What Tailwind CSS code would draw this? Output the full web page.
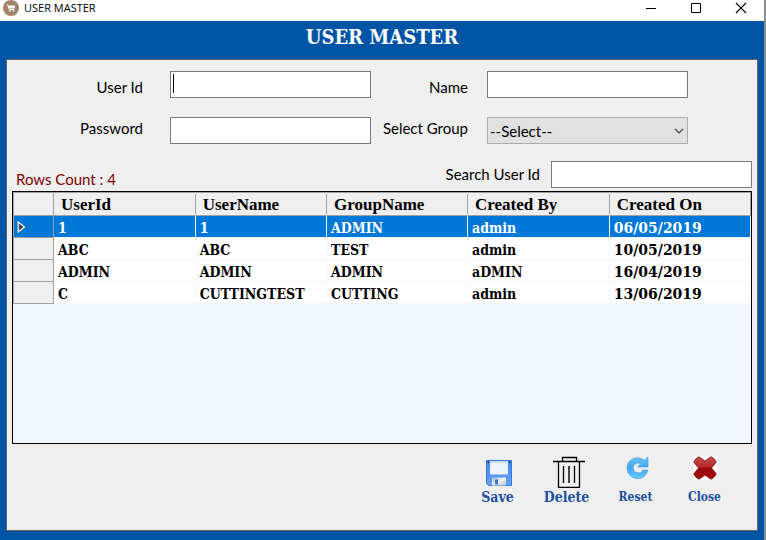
<!DOCTYPE html>
<html lang="en">
<head>
<meta charset="utf-8">
<meta name="viewport" content="width=device-width, initial-scale=1">
<title>USER MASTER</title>
<script src="https://cdn.jsdelivr.net/npm/@tailwindcss/browser@4"></script>
</head>
<body class="flex h-screen flex-col overflow-hidden border-r-2 border-[#8a8f96] bg-[#0054a6] font-['Lato','Open_Sans',sans-serif] text-[15px] leading-5 text-black">
<!-- Title bar -->
<div class="flex h-[21px] shrink-0 items-start bg-white pl-[3px]">
  <svg class="size-4" viewBox="0 0 16 16" aria-hidden="true"><circle cx="8" cy="8" r="8" fill="#a1826b"/><path d="M3.500 5h1.500l1.200 4.500h5" fill="none" stroke="#fff" stroke-width=".9"/><path d="M5.400 5.500h6.800l-.6 2.900H6.200z" fill="#fff"/><circle cx="7" cy="10.900" r=".8" fill="#fff"/><circle cx="10.500" cy="10.900" r=".8" fill="#fff"/></svg>
  <span class="pl-[5px] font-['Open_Sans',sans-serif] text-[11px] leading-4">USER MASTER</span>
  <div class="ml-auto flex">
    <button type="button" aria-label="Minimize" class="flex h-4 w-[45px] items-center justify-center"><svg class="size-3" viewBox="0 0 12 12"><path d="M1 6.500h10" stroke="#000"/></svg></button>
    <button type="button" aria-label="Maximize" class="flex h-4 w-[45px] items-center justify-center"><svg class="size-3" viewBox="0 0 12 12"><path d="M1.500 1.500h9v9h-9z" fill="none" stroke="#000"/></svg></button>
    <button type="button" aria-label="Close window" class="flex h-4 w-[46px] items-center justify-center"><svg class="size-3" viewBox="0 0 12 12"><path d="M1 1l10 10M11 1L1 11" stroke="#000" stroke-width="1.100"/></svg></button>
  </div>
</div>
<h1 class="h-[38px] shrink-0 text-center font-['DejaVu_Serif_Condensed','DejaVu_Serif',serif] text-xl leading-8 font-bold text-white">USER MASTER</h1>

<main class="mx-[6px] mb-[9px] flex min-h-0 flex-1 flex-col border border-[#646464] bg-[#efefef] px-[5px] pt-[11px]">
  <form class="grid grid-cols-[131px_228fr_97px_220fr] gap-y-[19px] pr-[64px]">
    <label for="uid" class="pt-[6px] text-right">User Id</label>
    <div class="relative pl-[27px]"><input id="uid" class="h-[27px] w-full border border-[#7a7a7a] bg-white px-[3px] outline-none"><span class="pointer-events-none absolute top-[3px] left-[30px] h-[19px] w-px bg-black"></span></div>
    <label for="name" class="pt-[6px] text-right">Name</label>
    <div class="pl-[19px]"><input id="name" class="h-[27px] w-full border border-[#7a7a7a] bg-white px-[3px] outline-none"></div>
    <label for="pwd" class="pt-[1px] text-right">Password</label>
    <div class="pl-[27px]"><input id="pwd" type="password" class="h-[27px] w-full border border-[#7a7a7a] bg-white px-[3px] outline-none"></div>
    <label for="grp" class="pt-[1px] text-right">Select Group</label>
    <div class="relative pl-[19px]"><select id="grp" class="h-[27px] w-full appearance-none border border-[#adadad] bg-[#e1e1e1] pr-4 pl-[2px] outline-none"><option>--Select--</option></select>
      <svg class="pointer-events-none absolute top-[11px] right-1 h-[6px] w-[10px]" viewBox="0 0 10 6" fill="none" stroke="#444" stroke-width="1.200"><path d="M1 1l4 4 4-4"/></svg></div>
  </form>
  <div class="mt-[17px] flex items-start">
    <p class="pt-2 pl-1 text-[#800000]">Rows Count : 4</p>
    <label for="search" class="ml-auto pt-[3px] pr-[11px]">Search User Id</label>
    <input id="search" class="h-[27px] w-[201px] border border-[#7a7a7a] bg-white px-[3px] outline-none">
  </div>
  <div class="mt-[2px] min-h-0 flex-1 border border-black bg-[#f0f8ff]">
    <table class="w-full table-fixed border-separate border-spacing-0 text-left font-['DejaVu_Serif_Condensed','DejaVu_Serif',serif] text-sm leading-[17px] font-bold">
      <colgroup><col class="w-[41px]"><col class="w-[19.2%]"><col class="w-[17.8%]"><col class="w-[19.1%]"><col class="w-[19.2%]"><col></colgroup>
      <thead class="bg-[#efefef] font-['Liberation_Serif',serif] text-[17px] leading-[18px] [&_th]:border-y [&_th]:border-[#a0a0a0] [&_th]:p-0">
        <tr>
          <th class="border-x"></th>
          <th><div class="my-[1px] border-r border-[#a0a0a0] pt-[2px] pl-[7px]">UserId</div></th>
          <th><div class="my-[1px] border-r border-[#a0a0a0] pt-[2px] pl-[7px]">UserName</div></th>
          <th><div class="my-[1px] border-r border-[#a0a0a0] pt-[2px] pl-[7px]">GroupName</div></th>
          <th><div class="my-[1px] border-r border-[#a0a0a0] pt-[2px] pl-[7px]">Created By</div></th>
          <th class="border-r"><div class="my-[1px] pt-[2px] pl-[7px]">Created On</div></th>
        </tr>
      </thead>
      <tbody class="bg-white [&_td]:border-r [&_td]:border-b [&_td]:border-[#f0f8ff] [&_td]:p-0 [&_td]:pt-1 [&_td]:pl-1 [&_td:last-child]:font-['DejaVu_Serif',serif] [&_th]:border-x [&_th]:border-b [&_th]:border-[#a0a0a0] [&_th]:p-0">
        <tr class="bg-[#0078d7] text-white"><th><svg class="ml-[3px] h-3 w-[9px]" viewBox="0 0 9 12"><path d="M1.200 1v10L7.500 6z" fill="#444" stroke="#fff" stroke-width="1.200"/></svg></th><td>1</td><td>1</td><td>ADMIN</td><td>admin</td><td>06/05/2019</td></tr>
        <tr><th class="bg-[#efefef]"></th><td>ABC</td><td>ABC</td><td>TEST</td><td>admin</td><td>10/05/2019</td></tr>
        <tr><th class="bg-[#efefef]"></th><td>ADMIN</td><td>ADMIN</td><td>ADMIN</td><td>aDMIN</td><td>16/04/2019</td></tr>
        <tr><th class="bg-[#efefef]"></th><td>C</td><td>CUTTINGTEST</td><td>CUTTING</td><td>admin</td><td>13/06/2019</td></tr>
      </tbody>
    </table>
  </div>
  <div class="flex h-[86px] shrink-0 justify-end pt-3 pr-[13px] font-['DejaVu_Serif_Condensed','DejaVu_Serif',serif] text-xs leading-5 font-bold text-[#1c4f9f]">
    <button type="button" class="flex w-[69px] flex-col items-center text-sm leading-5">
      <span class="flex h-[31px] items-end pl-[2px]"><svg class="size-7" viewBox="0 0 28 28"><defs><linearGradient id="sv" x2="0" y2="1"><stop stop-color="#3f86e8"/><stop offset="1" stop-color="#62a5f8"/></linearGradient><linearGradient id="sh" x2="1" y2="1"><stop stop-color="#aab4c2"/><stop offset=".5" stop-color="#f4f4f4"/><stop offset="1" stop-color="#b5bdc9"/></linearGradient></defs><path d="M1.500 1.500h25v25h-23l-2-2z" fill="url(#sv)" stroke="#3576d8"/><path d="M5 2h18v12.500q0 1-1 1H6q-1 0-1-1z" fill="#eef2fa"/><path d="M5 2h18v2H5z" fill="#d4dcec"/><path d="M7 18.500h14v8H7z" fill="url(#sh)"/><path d="M10 20.500h3v5h-3z" fill="#3576d8"/><path d="M2.500 2.500h1.500v1.500H2.500zM24 2.500h1.500v1.500H24z" fill="#123c7c"/></svg></span>
      <span>Save</span>
    </button>
    <button type="button" class="flex w-[69px] flex-col items-center text-sm leading-5">
      <span class="flex h-[31px] items-start pl-1"><svg class="size-8" viewBox="0 0 32 32" fill="none" stroke="#000"><path d="M0 5.500h32M9.500 5V1.500h14V5" stroke-width="1.300"/><path d="M5.500 6v25.300h21V6" stroke-width="1.300"/><path d="M10.500 10v17M21.500 10v17" stroke-width="1.300"/><path d="M16 10v17" stroke="#444" stroke-width="2"/></svg></span>
      <span>Delete</span>
    </button>
    <button type="button" class="flex w-[69px] flex-col items-center">
      <span class="flex h-[31px] items-start pl-[2px]"><svg class="size-6" viewBox="0 0 24 24"><defs><linearGradient id="rs" x2="0" y2="1"><stop stop-color="#69c5f8"/><stop offset=".5" stop-color="#43a5ef"/><stop offset="1" stop-color="#67ccff"/></linearGradient></defs><path d="M19.300 4.200 23 1v10H12.500l3.300-3.300C12.500 5.800 8.300 8 8.300 12c0 5.500 8 6.700 9.500 2h5C21.500 20 17.500 22.500 13 22.500 6.500 22.500 2 18 2 12 2 3.500 12-1.500 19.300 4.200z" fill="url(#rs)" stroke="#3e9bdc" stroke-width=".6"/></svg></span>
      <span>Reset</span>
    </button>
    <button type="button" class="flex w-[69px] flex-col items-center">
      <span class="flex h-[31px] items-start"><svg class="size-6 bg-white" viewBox="0 0 24 24"><defs><linearGradient id="cl" x2="0" y2="1"><stop stop-color="#c85050"/><stop offset=".45" stop-color="#b52a2a"/><stop offset=".5" stop-color="#980808"/><stop offset="1" stop-color="#a90c0c"/></linearGradient></defs><path d="M6 .7 12 5l6-4.300q3.500 1.300 5.300 5.300L18.500 12l4.800 6q-1.800 4-5.300 5.300L12 19l-6 4.300Q2.500 22 .7 18l4.800-6L.7 6Q2.500 2 6 .7z" fill="url(#cl)" stroke="#7d0a0a" stroke-width=".8"/></svg></span>
      <span>Close</span>
    </button>
  </div>
</main>
</body>
</html>
